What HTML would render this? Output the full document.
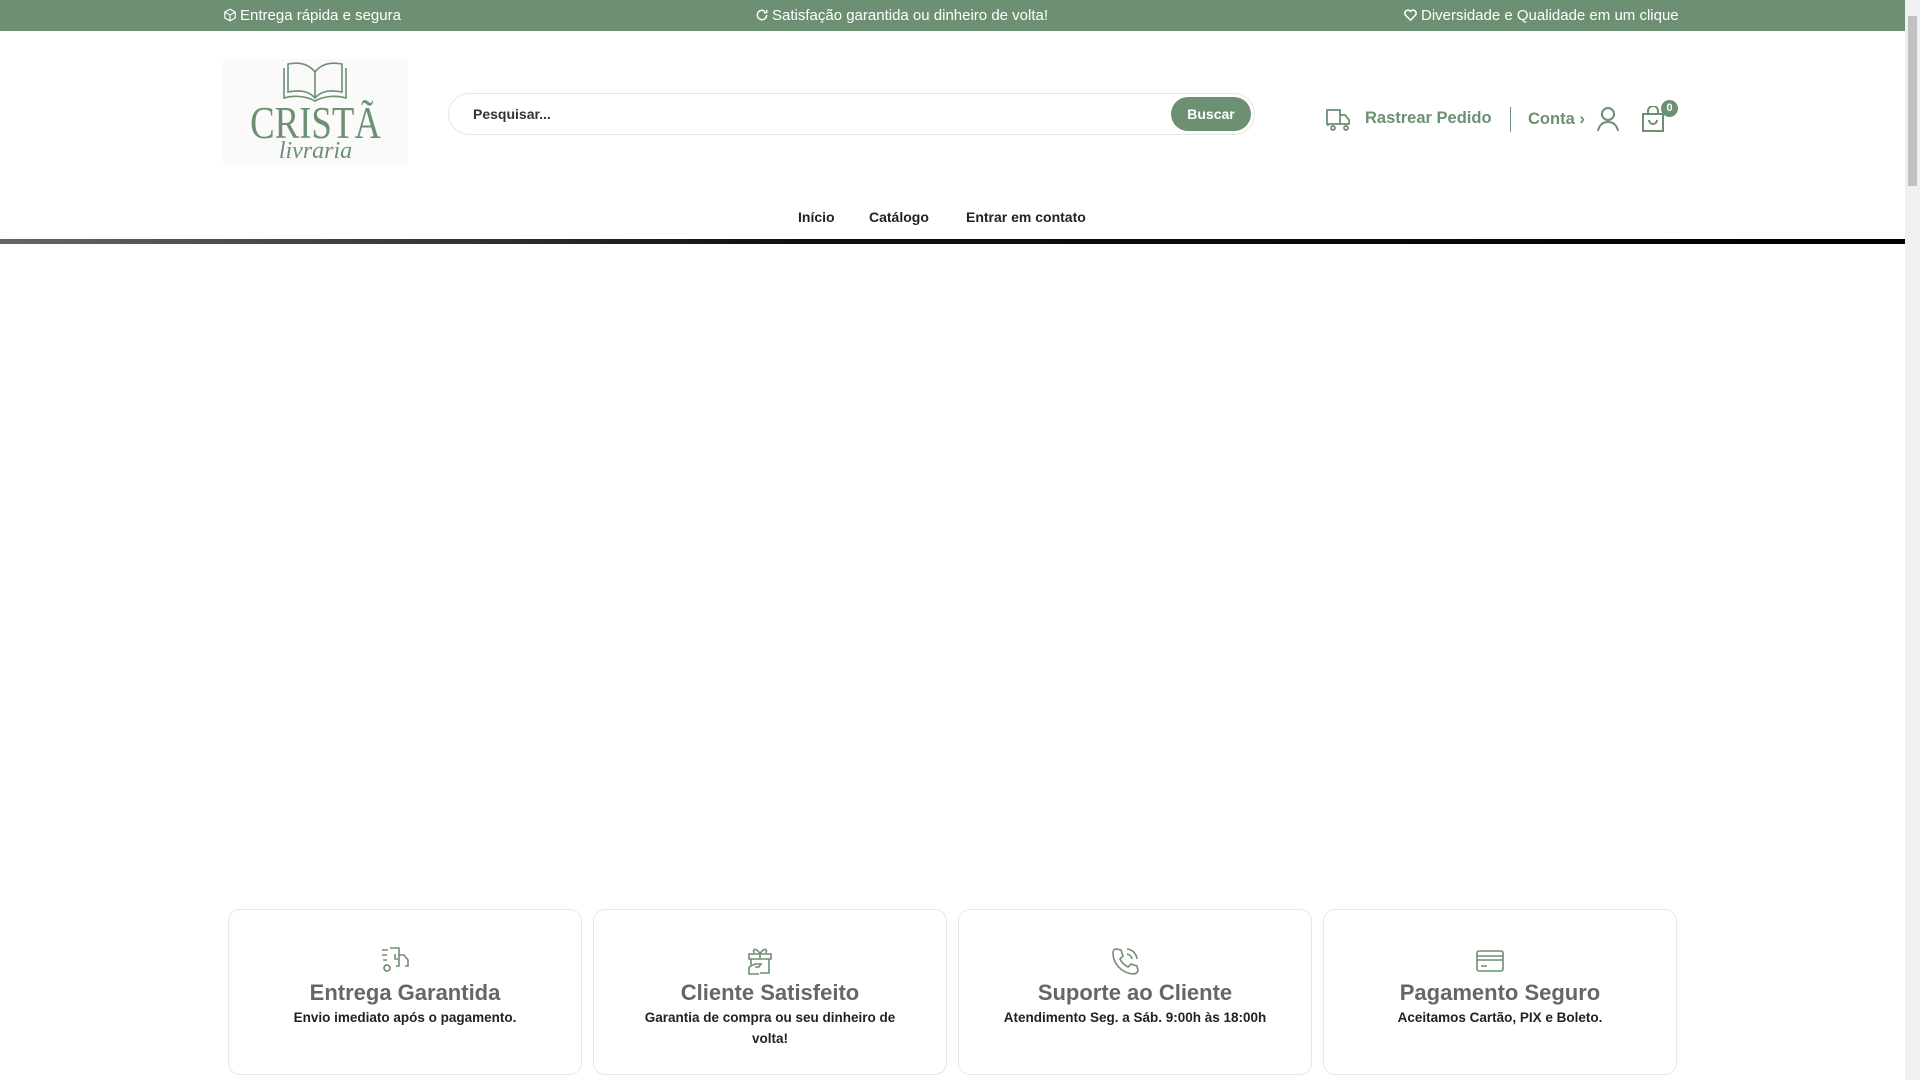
<!DOCTYPE html>
<html><head><meta charset="utf-8"><style>
*{margin:0;padding:0;box-sizing:border-box}
body{width:1920px;height:1080px;overflow:hidden;background:#fff;font-family:"Liberation Sans",sans-serif;position:relative}
.top{position:absolute;left:0;top:0;width:1905px;height:31px;background:#6d8f72;color:#fff;font-size:15px}
.top span{position:absolute;top:7px;white-space:nowrap}
.top svg{vertical-align:-2px;margin-right:3px}
.sb{position:absolute;right:0;top:0;width:15px;height:1080px;background:#f1f1f1}
.sb div{position:absolute;left:3px;top:16px;width:9px;height:170px;background:#c1c1c1}
.logo{position:absolute;left:223px;top:59px;width:185px;height:105px;background:#fafafa;text-align:center;color:#6d8f72}
.search{position:absolute;left:448px;top:93px;width:807px;height:42px;border:1px solid #e6e6e6;border-radius:21px}
.search .ph{position:absolute;left:24px;top:12px;font-size:14px;font-weight:bold;color:#333}
.search .btn{position:absolute;right:3px;top:3px;width:80px;height:34px;border-radius:17px;background:#6d8f72;color:#fff;font-size:14px;font-weight:bold;text-align:center;line-height:34px}
.g{color:#6d8f72;font-weight:bold;position:absolute;font-size:16.5px}
.nav{position:absolute;top:209px;font-size:14px;font-weight:bold;color:#222}
.bar{position:absolute;left:0;top:239px;width:1905px;height:5px;background:linear-gradient(90deg,#666,#111 40%,#000)}
.card{position:absolute;top:909px;width:354px;height:166px;border:1px solid #e8e8e8;border-radius:12px;text-align:center}
.card svg{position:absolute;left:151px;top:36px}
.card h3{position:absolute;top:70px;width:100%;font-size:22px;font-weight:bold;color:#666}
.card p{position:absolute;top:97px;left:30px;right:30px;font-size:13.5px;font-weight:bold;color:#222;line-height:21px}
</style></head><body>
<div class="top">
<span style="left:223px"><svg width="14" height="14" viewBox="0 0 24 24" fill="none" stroke="#fff" stroke-width="2"><path d="M12 2l9 5v10l-9 5-9-5V7z M3 7l9 5 9-5 M12 12v10"/></svg>Entrega rápida e segura</span>
<span style="left:755px"><svg width="14" height="14" viewBox="0 0 24 24" fill="none" stroke="#fff" stroke-width="2.5"><path d="M20 12a8 8 0 1 1-3-6.2 M20 3v5h-5"/></svg>Satisfação garantida ou dinheiro de volta!</span>
<span style="left:1403px"><svg width="15" height="15" viewBox="0 0 24 24" fill="none" stroke="#fff" stroke-width="2.5"><path d="M12 21l-8-8a5 5 0 0 1 8-6 5 5 0 0 1 8 6z"/></svg>Diversidade e Qualidade em um clique</span>
</div>
<div class="sb"><div></div></div>
<div class="logo">
<svg width="70" height="42" viewBox="0 0 70 42" style="position:absolute;left:57px;top:1px" fill="none" stroke="#6d8f72" stroke-width="1.6"><path d="M35 38C28 30 18 30 8 32V4c10-2 20-1 27 8 7-9 17-10 27-8v28c-10-2-20-2-27 6z M35 12v26 M4 8v30c10-3 22-2 31 3 9-5 21-6 31-3V8"/></svg>
<div style="position:absolute;top:40px;width:100%;font-family:'Liberation Serif',serif;font-size:40px;transform:scale(0.92,1.15)">CRISTÃ</div>
<div style="position:absolute;top:79px;width:100%;font-family:'Liberation Serif',serif;font-style:italic;font-size:24px">livraria</div>
</div>
<div class="search"><div class="ph">Pesquisar...</div><div class="btn">Buscar</div></div>
<svg style="position:absolute;left:1325px;top:107px" width="26" height="24" viewBox="0 0 26 24" fill="none" stroke="#6d8f72" stroke-width="1.8"><path d="M2 3h13v14H2z M15 8h5l4 5v4h-9 M3 17v2 M6 21a2 2 0 1 0 0-.1 M19 21a2 2 0 1 0 0-.1"/></svg>
<div class="g" style="left:1365px;top:109px">Rastrear Pedido</div>
<div style="position:absolute;left:1510px;top:107px;width:1px;height:25px;background:#6d8f72"></div>
<div class="g" style="left:1528px;top:110px">Conta ›</div>
<svg style="position:absolute;left:1596px;top:106px" width="24" height="26" viewBox="0 0 24 26" fill="none" stroke="#6d8f72" stroke-width="2"><circle cx="12" cy="8" r="6"/><path d="M2 25c1-6 5-9 10-9s9 3 10 9"/></svg>
<svg style="position:absolute;left:1641px;top:106px" width="24" height="26" viewBox="0 0 24 26" fill="none" stroke="#6d8f72" stroke-width="2"><path d="M2 8h20v17H2z M7 8V5a5 5 0 0 1 10 0v3 M8 14a4 4 0 0 0 8 0"/></svg>
<div style="position:absolute;left:1661px;top:100px;width:17px;height:17px;border-radius:50%;background:#6d8f72;color:#fff;font-size:11px;font-weight:bold;text-align:center;line-height:17px">0</div>
<div class="nav" style="left:798px">Início</div>
<div class="nav" style="left:869px">Catálogo</div>
<div class="nav" style="left:966px">Entrar em contato</div>
<div class="bar"></div>
<div class="card" style="left:228px"><svg width="30" height="30" viewBox="0 0 30 30" fill="none" stroke="#6d8f72" stroke-width="1.6"><path d="M2 4h6 M2 9h5 M3 14h4 M5 19h2 M10 2h9v18h-3 M19 9h5l4 5v6h-3 M15 8v5h3 M10 22a3 3 0 1 0 0 .1"/></svg><h3>Entrega Garantida</h3><p>Envio imediato após o pagamento.</p></div>
<div class="card" style="left:593px"><svg width="30" height="30" viewBox="0 0 30 30" fill="none" stroke="#6d8f72" stroke-width="1.6"><path d="M4 8h22v5H4z M6 13v6 M24 13v14H15 M15 8v5 M15 8c-3-6-8-6-6-1 M15 8c3-6 8-6 6-1 M4 21l6-3h6l-2 3h-4 M4 21v7h10"/></svg><h3>Cliente Satisfeito</h3><p style="left:45px;right:45px">Garantia de compra ou seu dinheiro de volta!</p></div>
<div class="card" style="left:958px"><svg width="30" height="30" viewBox="0 0 30 30" fill="none" stroke="#6d8f72" stroke-width="1.6"><path d="M6 3l5 1 2 6-3 3c2 4 4 6 8 8l3-3 6 2 1 5c-1 2-3 3-5 3C12 27 3 18 3 7c0-2 1-4 3-4z M17 8a6 6 0 0 1 5 5 M17 3a11 11 0 0 1 10 10"/></svg><h3>Suporte ao Cliente</h3><p>Atendimento Seg. a Sáb. 9:00h às 18:00h</p></div>
<div class="card" style="left:1323px"><svg width="30" height="30" viewBox="0 0 30 30" fill="none" stroke="#6d8f72" stroke-width="1.6"><rect x="2" y="5" width="26" height="20" rx="2"/><path d="M2 10h26 M2 14h26 M6 20h6"/></svg><h3>Pagamento Seguro</h3><p>Aceitamos Cartão, PIX e Boleto.</p></div>
</body></html>
